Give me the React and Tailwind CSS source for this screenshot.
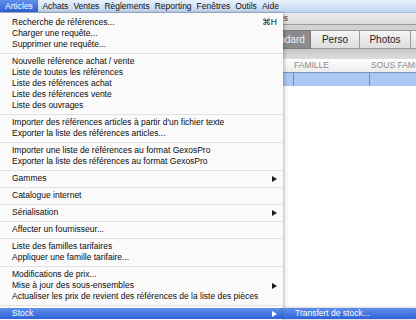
import React from "react";

const menuTitles = ["Articles", "Achats", "Ventes", "Règlements", "Reporting", "Fenêtres", "Outils", "Aide"];

// groups of the Articles menu, separated by lines
const groups = [
    [{ label: "Recherche de références...", shortcut: "⌘H" }, { label: "Charger une requête..." }, { label: "Supprimer une requête..." }],
    [
        { label: "Nouvelle référence achat / vente" },
        { label: "Liste de toutes les références" },
        { label: "Liste des références achat" },
        { label: "Liste des références vente" },
        { label: "Liste des ouvrages" },
    ],
    [{ label: "Importer des références articles à partir d'un fichier texte" }, { label: "Exporter la liste des références articles..." }],
    [{ label: "Importer une liste de références au format GexosPro" }, { label: "Exporter la liste des références au format GexosPro" }],
    [{ label: "Gammes", sub: true }],
    [{ label: "Catalogue internet" }],
    [{ label: "Sérialisation", sub: true }],
    [{ label: "Affecter un fournisseur..." }],
    [{ label: "Liste des familles tarifaires" }, { label: "Appliquer une famille tarifaire..." }],
    [{ label: "Modifications de prix..." }, { label: "Mise à jour des sous-ensembles", sub: true }, { label: "Actualiser les prix de revient des références de la liste des pièces" }],
    [{ label: "Stock", sub: true, active: true }],
];

function Arrow({ white }) {
    return (
        <svg width="5" height="6" viewBox="0 0 5 6" className="shrink-0">
            <path d="M0 0 L5 3 L0 6 Z" fill={white ? "#ffffff" : "#1a1a1a"} />
        </svg>
    );
}

function MenuItem({ item }) {
    return (
        <div
            className={
                "h-[11px] flex items-center pl-[12px] pr-[6px] leading-none " +
                (item.active ? "bg-gradient-to-b from-[#5f8fea] to-[#2f62d6] text-white" : "text-[#0c0c0c]")
            }
        >
            <span className="flex-1 whitespace-nowrap">{item.label}</span>
            {item.shortcut && <span className="whitespace-nowrap pl-[8px]">{item.shortcut}</span>}
            {item.sub && <Arrow white={item.active} />}
        </div>
    );
}

export default function App() {
    return (
        <div
            className="relative w-[416px] h-[320px] overflow-hidden bg-white text-[8.5px]"
            style={{ fontFamily: '"Liberation Sans", "DejaVu Sans", sans-serif' }}
        >
            {/* menu bar */}
            <div className="h-[13px] flex items-stretch bg-gradient-to-b from-[#e9f0fb] to-[#c2d6f1] border-b border-[#a9bcd8]">
                {menuTitles.map((t, i) => (
                    <div
                        key={t}
                        className={
                            "shrink-0 flex items-center leading-none whitespace-nowrap " +
                            (i === 0 ? "px-[5px] mr-[2px] bg-gradient-to-b from-[#5f8fea] to-[#2f62d6] text-white" : "px-[2.5px] text-[#111]")
                        }
                    >
                        {t}
                    </div>
                ))}
            </div>

            {/* window behind the menu */}
            <div className="flex flex-col">
                <div className="h-[11px] flex items-center justify-end pr-[128px] bg-gradient-to-b from-[#ececec] to-[#dcdcdc] text-[#444]">
                    Références
                </div>
                <div className="h-[1px] bg-[#9c9c9c]" />
                <div className="h-[24px] flex items-end pl-[258px] bg-gradient-to-b from-[#d2d2d2] to-[#c6c6c6]">
                    <div className="shrink-0 w-[53px] h-[19px] flex items-center justify-center bg-[#8b8b8b] text-[#f4f4f4] text-[10px] border border-[#7a7a7a]">
                        Standard
                    </div>
                    <div className="shrink-0 w-[49px] h-[19px] flex items-center justify-center bg-gradient-to-b from-[#f6f6f6] to-[#dedede] text-[#222] text-[10px] border border-l-0 border-[#9a9a9a]">
                        Perso
                    </div>
                    <div className="shrink-0 w-[51px] h-[19px] flex items-center justify-center bg-gradient-to-b from-[#f6f6f6] to-[#dedede] text-[#222] text-[10px] border border-l-0 border-[#9a9a9a]">
                        Photos
                    </div>
                    <div className="shrink-0 w-[20px] h-[19px] bg-gradient-to-b from-[#f6f6f6] to-[#dedede] border border-l-0 border-[#9a9a9a]" />
                </div>
                <div className="h-[10px] bg-gradient-to-b from-[#c6c6c6] to-[#dedede]" />
                <div className="h-[14px] flex items-center bg-gradient-to-b from-[#ffffff] to-[#ededed] border-b border-[#7f93b5] text-[#8a8a8a] text-[8.5px]">
                    <div className="shrink-0 w-[294px]" />
                    <div className="shrink-0 w-[76px]">FAMILLE</div>
                    <div className="shrink-0 pl-[1px] whitespace-nowrap">SOUS FAMILLE</div>
                </div>
                <div className="h-[13px] flex bg-[#a9c8f4]">
                    <div className="shrink-0 w-[293px]" />
                    <div className="shrink-0 w-[76px] border-l border-[#6e8cba]" />
                    <div className="flex-1 border-l border-[#6e8cba]" />
                </div>
            </div>

            {/* Articles dropdown */}
            <div className="absolute left-0 top-[13px] w-[283px] bottom-0 bg-[#fafafa] pt-[4px] shadow-[1px_0_4px_rgba(0,0,0,0.3)]">
                {groups.map((g, gi) => (
                    <div key={gi}>
                        {gi > 0 && (
                            <div className="pt-[3px] pb-[2px]">
                                <div className="h-[1px] bg-[#e2e2e2]" />
                            </div>
                        )}
                        {g.map((item) => (
                            <MenuItem key={item.label} item={item} />
                        ))}
                    </div>
                ))}
            </div>

            {/* Stock submenu */}
            <div className="absolute left-[283px] right-0 top-[308px] bg-[#fafafa] shadow-[0_0_3px_rgba(0,0,0,0.3)]">
                <div className="h-[11px] flex items-center pl-[12px] leading-none bg-gradient-to-b from-[#5f8fea] to-[#2f62d6] text-white">
                    Transfert de stock...
                </div>
            </div>
        </div>
    );
}
